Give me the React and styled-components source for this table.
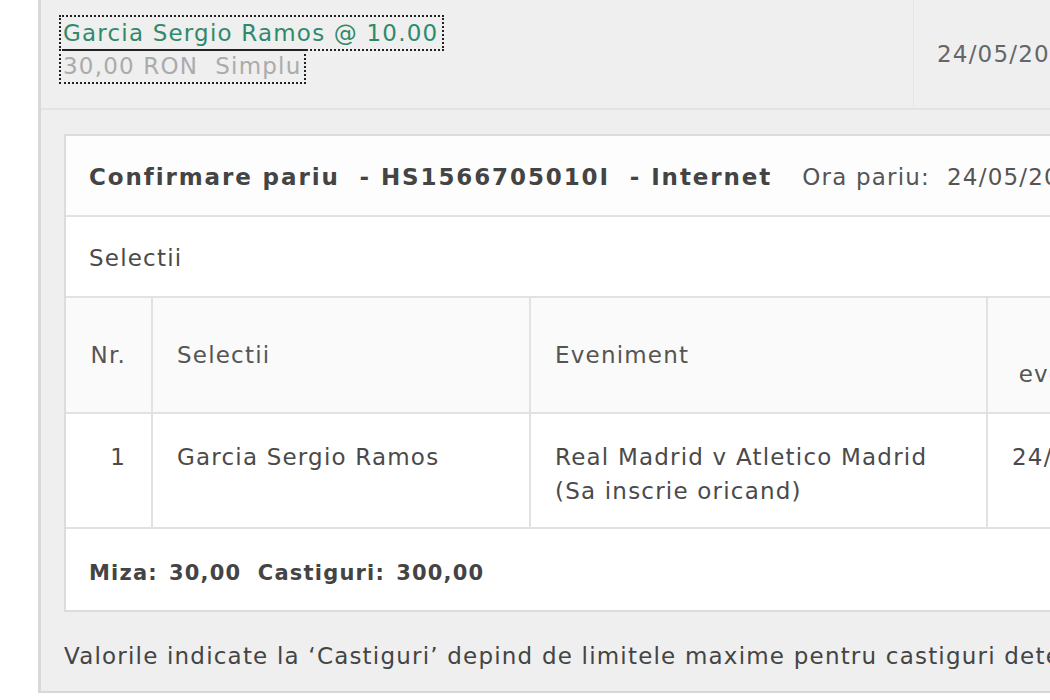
import React from 'react'
import styled, { createGlobalStyle } from 'styled-components'

const GlobalStyle = createGlobalStyle`
  body {
    margin: 0;
    background: #fff;
    overflow: hidden;
    font-family: "DejaVu Sans", Verdana, sans-serif;
    font-size: 23px;
    letter-spacing: 1.2px;
    color: #4a4a4a;
  }
`

const Page = styled.div`
  padding-left: 38px;
  width: 1400px;
`

const Panel = styled.div`
  background: #efefef;
  border-left: 3px solid #d8d8d8;
  border-bottom: 2px solid #d8d8d8;
  height: 693px;
  box-sizing: border-box;
`

const TopRow = styled.div`
  display: flex;
  height: 110px;
  box-sizing: border-box;
  border-bottom: 2px solid #e3e3e3;
`

const BetCell = styled.div`
  width: 872px;
  padding: 16px 0 0 19px;
  box-sizing: border-box;
`

const BetLine = styled.div`
  display: inline-block;
  outline: 2px dotted #222;
  outline-offset: -1px;
  padding: ${p => (p.$muted ? '0 4px 0 3px' : '1px 5px 0 3px')};
  line-height: 33px;
  color: ${p => (p.$muted ? '#ababab' : '#2f8a6c')};
  white-space: pre;
`

const DateCell = styled.div`
  border-left: 1px solid #e6e6e6;
  display: flex;
  align-items: center;
  padding-left: 23px;
  color: #666;
  white-space: nowrap;
`

const Body = styled.div`
  padding: 24px 0 0 23px;
`

const Card = styled.div`
  background: #fff;
  border: 2px solid #dcdcdc;
  width: 1300px;
`

const CardRow = styled.div`
  display: flex;
  align-items: center;
  height: 81px;
  padding: ${p => (p.$last ? '6px 0 0 23px' : '2px 0 0 23px')};
  box-sizing: border-box;
  border-bottom: ${p => (p.$last ? 'none' : '2px solid #e2e2e2')};
  background: ${p => (p.$tint ? '#fdfdfd' : '#fff')};
  white-space: pre;
`

const Strong = styled.span`
  font-weight: bold;
  letter-spacing: 1.9px;
  color: #444;
`

const Totals = styled.span`
  font-weight: bold;
  font-size: 21px;
  letter-spacing: 1.2px;
  word-spacing: -3px;
  color: #444;
`

const Light = styled.span`
  margin-left: 30px;
  color: #555;
`

const Table = styled.table`
  border-collapse: collapse;
  width: 100%;
  font-size: 23px;
`

const Th = styled.th`
  height: 115px;
  background: #fafafa;
  font-weight: normal;
  color: #555;
  text-align: ${p => p.$align || 'left'};
  padding: ${p => (p.$align === 'right' ? '0 25px 0 0' : '0 0 0 24px')};
  width: ${p => (p.$w ? `${p.$w}px` : 'auto')};
  border-right: 2px solid #e2e2e2;
  border-bottom: 2px solid #e2e2e2;
  box-sizing: border-box;
  line-height: ${p => (p.$tall ? '39px' : 'normal')};
  vertical-align: middle;
  white-space: nowrap;
`

const Td = styled.td`
  height: 115px;
  vertical-align: top;
  padding: ${p => (p.$align === 'right' ? '26px 25px 0 0' : '26px 0 0 24px')};
  text-align: ${p => p.$align || 'left'};
  line-height: 34px;
  border-right: 2px solid #e2e2e2;
  border-bottom: 2px solid #e2e2e2;
  color: #4a4a4a;
  box-sizing: border-box;
  white-space: nowrap;
`

const Note = styled.div`
  padding-top: 31px;
  color: #444;
  white-space: nowrap;
`

export default function App() {
  return (
    <Page>
      <GlobalStyle />
      <Panel>
        <TopRow>
          <BetCell>
            <BetLine>Garcia Sergio Ramos @ 10.00</BetLine>
            <br />
            <BetLine $muted>30,00 RON  Simplu</BetLine>
          </BetCell>
          <DateCell>24/05/2014 21:45</DateCell>
        </TopRow>
        <Body>
          <Card>
            <CardRow $tint>
              <Strong>Confirmare pariu  - HS1566705010I  - Internet</Strong>
              <Light>Ora pariu:  24/05/2014 14:32</Light>
            </CardRow>
            <CardRow>Selectii</CardRow>
            <Table>
              <thead>
                <tr>
                  <Th $w={86} $align="right">Nr.</Th>
                  <Th $w={378}>Selectii</Th>
                  <Th $w={457}>Eveniment</Th>
                  <Th $w={220} $align="center" $tall>Data<br />evenimentului</Th>
                  <Th>Cota</Th>
                </tr>
              </thead>
              <tbody>
                <tr>
                  <Td $align="right">1</Td>
                  <Td>Garcia Sergio Ramos</Td>
                  <Td>Real Madrid v Atletico Madrid<br />(Sa inscrie oricand)</Td>
                  <Td>24/05/2014</Td>
                  <Td>10.00</Td>
                </tr>
              </tbody>
            </Table>
            <CardRow $last>
              <Totals>Miza:  30,00   Castiguri:  300,00</Totals>
            </CardRow>
          </Card>
          <Note>Valorile indicate la ‘Castiguri’ depind de limitele maxime pentru castiguri determinate de regulament.</Note>
        </Body>
      </Panel>
    </Page>
  )
}
